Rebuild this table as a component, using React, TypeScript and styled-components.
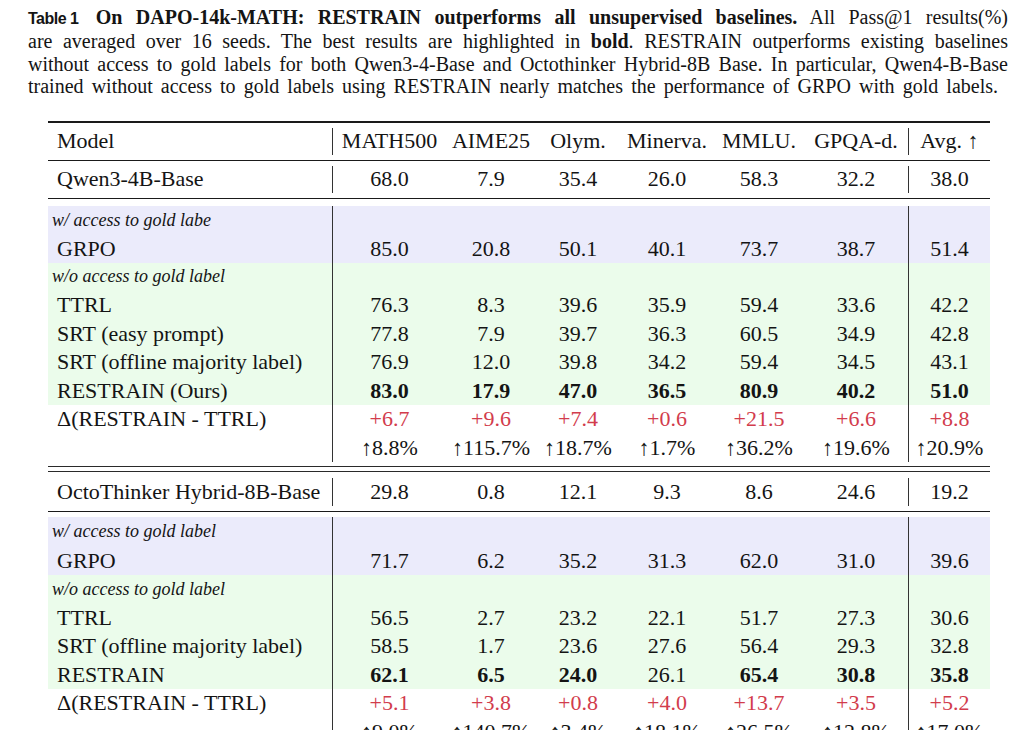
import React from "react";
import styled, { createGlobalStyle } from "styled-components";

const SERIF = `"Liberation Serif", "Times New Roman", serif`;

const GlobalStyle = createGlobalStyle`
  html, body {
    margin: 0;
    padding: 0;
    background: #ffffff;
    overflow: hidden;
  }
  body {
    font-family: ${SERIF};
    color: #141414;
  }
`;

// column widths of the tabular, left edge at x=48
const COLS = "284px 114px 90px 84px 94px 90px 104px 82px";

const GOLD_BG = "#ebebfb";
const NOGOLD_BG = "#ebfceb";

const Page = styled.main`
  padding: 6px 26px 0 28px;
`;

const Caption = styled.div`
  font-size: 20px;
  line-height: 22.4px;
`;

const CaptionLine = styled.div<{ $width?: number }>`
  width: ${(p) => (p.$width ? `${p.$width}px` : "100%")};
  text-align: justify;
  text-align-last: justify;
`;

// inline-block so the justified line doesn't stretch the space inside it
const TableTag = styled.span`
  display: inline-block;
  white-space: pre;
  font-family: "Liberation Sans", Arial, sans-serif;
  font-weight: 700;
  font-size: 16px;
  letter-spacing: -0.5px;
  margin-right: 4px;
`;

const Bold = styled.b`
  font-weight: 700;
`;

const Table = styled.section`
  width: 942px;
  margin: 23px 0 0 20px;
  font-size: 22px;
`;

const Rule = styled.div<{ $h: number }>`
  height: ${(p) => p.$h}px;
  background: #1a1a1a;
`;

const Gap = styled.div<{ $h: number }>`
  height: ${(p) => p.$h}px;
`;

const DoubleRule = styled.div`
  height: 1px;
  border-top: 1px solid #2a2a2a;
  border-bottom: 1px solid #2a2a2a;
  padding: 1.5px 0;
  background: #fff;
`;

const Section = styled.div<{ $bg?: string }>`
  background: ${(p) => p.$bg ?? "transparent"};
`;

const Row = styled.div<{ $h: number; $pad?: number }>`
  display: grid;
  grid-template-columns: ${COLS};
  height: ${(p) => p.$h}px;
  padding: ${(p) => p.$pad ?? 0}px 0;
`;

const Cell = styled.div<{ $sep?: boolean; $left?: boolean; $bold?: boolean; $red?: boolean }>`
  display: flex;
  align-items: center;
  justify-content: ${(p) => (p.$left ? "flex-start" : "center")};
  padding-left: ${(p) => (p.$left ? "9px" : "0")};
  border-left: ${(p) => (p.$sep ? "1px solid #333" : "none")};
  font-weight: ${(p) => (p.$bold ? 700 : 400)};
  color: ${(p) => (p.$red ? "#d23c4c" : "inherit")};
  white-space: nowrap;
`;

const GroupLabel = styled.div`
  display: flex;
  align-items: center;
  padding-left: 4px;
  font-style: italic;
  font-size: 18px;
  white-space: nowrap;
`;

const isSep = (i: number) => i === 1 || i === 7;

interface LineProps {
  name: string;
  values: string[];
  bold?: number[];
  red?: boolean;
  h: number;
  pad?: number;
}

const Line = ({ name, values, bold = [], red, h, pad }: LineProps) => (
  <Row $h={h} $pad={pad}>
    <Cell $left>{name}</Cell>
    {values.map((v, i) => (
      <Cell key={i} $sep={isSep(i + 1)} $bold={bold.includes(i)} $red={red}>
        {v}
      </Cell>
    ))}
  </Row>
);

const Label = ({ text, h }: { text: string; h: number }) => (
  <Row $h={h}>
    <GroupLabel>{text}</GroupLabel>
    {Array.from({ length: 7 }).map((_, i) => (
      <Cell key={i} $sep={isSep(i + 1)} />
    ))}
  </Row>
);

const ALL = [0, 1, 2, 3, 4, 5, 6];
const H = 28.5;

export default function App() {
  return (
    <>
      <GlobalStyle />
      <Page>
        <Caption>
          <CaptionLine>
            <TableTag>Table 1</TableTag>{" "}
            <Bold>On DAPO-14k-MATH: RESTRAIN outperforms all unsupervised baselines.</Bold> All Pass@1 results(%)
          </CaptionLine>
          <CaptionLine>
            are averaged over 16 seeds. The best results are highlighted in <Bold>bold</Bold>. RESTRAIN outperforms existing baselines
          </CaptionLine>
          <CaptionLine>
            without access to gold labels for both Qwen3-4-Base and Octothinker Hybrid-8B Base. In particular, Qwen4-B-Base
          </CaptionLine>
          <CaptionLine $width={970}>
            trained without access to gold labels using RESTRAIN nearly matches the performance of GRPO with gold labels.
          </CaptionLine>
        </Caption>

        <Table>
          <Rule $h={2} />
          <Line
            name="Model"
            values={["MATH500", "AIME25", "Olym.", "Minerva.", "MMLU.", "GPQA-d.", "Avg. ↑"]}
            h={27}
            pad={5}
          />
          <Rule $h={1} />
          <Line name="Qwen3-4B-Base" values={["68.0", "7.9", "35.4", "26.0", "58.3", "32.2", "38.0"]} h={27} pad={5} />
          <Rule $h={1} />
          <Gap $h={7} />
          <Section $bg={GOLD_BG}>
            <Label text="w/ access to gold labe" h={29} />
            <Line name="GRPO" values={["85.0", "20.8", "50.1", "40.1", "73.7", "38.7", "51.4"]} h={28} />
          </Section>
          <Section $bg={NOGOLD_BG}>
            <Label text="w/o access to gold label" h={H} />
            <Line name="TTRL" values={["76.3", "8.3", "39.6", "35.9", "59.4", "33.6", "42.2"]} h={H} />
            <Line name="SRT (easy prompt)" values={["77.8", "7.9", "39.7", "36.3", "60.5", "34.9", "42.8"]} h={H} />
            <Line
              name="SRT (offline majority label)"
              values={["76.9", "12.0", "39.8", "34.2", "59.4", "34.5", "43.1"]}
              h={H}
            />
            <Line
              name="RESTRAIN (Ours)"
              values={["83.0", "17.9", "47.0", "36.5", "80.9", "40.2", "51.0"]}
              bold={ALL}
              h={H}
            />
          </Section>
          <Section>
            <Line
              name="Δ(RESTRAIN - TTRL)"
              values={["+6.7", "+9.6", "+7.4", "+0.6", "+21.5", "+6.6", "+8.8"]}
              red
              h={H}
            />
            <Line
              name=""
              values={["↑8.8%", "↑115.7%", "↑18.7%", "↑1.7%", "↑36.2%", "↑19.6%", "↑20.9%"]}
              h={H}
            />
          </Section>
          <Gap $h={4} />
          <DoubleRule />
          <Line
            name="OctoThinker Hybrid-8B-Base"
            values={["29.8", "0.8", "12.1", "9.3", "8.6", "24.6", "19.2"]}
            h={28}
            pad={5.5}
          />
          <Rule $h={1} />
          <Gap $h={5} />
          <Section $bg={GOLD_BG}>
            <Label text="w/ access to gold label" h={29} />
            <Line name="GRPO" values={["71.7", "6.2", "35.2", "31.3", "62.0", "31.0", "39.6"]} h={29} />
          </Section>
          <Section $bg={NOGOLD_BG}>
            <Label text="w/o access to gold label" h={H} />
            <Line name="TTRL" values={["56.5", "2.7", "23.2", "22.1", "51.7", "27.3", "30.6"]} h={H} />
            <Line
              name="SRT (offline majority label)"
              values={["58.5", "1.7", "23.6", "27.6", "56.4", "29.3", "32.8"]}
              h={H}
            />
            <Line
              name="RESTRAIN"
              values={["62.1", "6.5", "24.0", "26.1", "65.4", "30.8", "35.8"]}
              bold={[0, 1, 2, 4, 5, 6]}
              h={H}
            />
          </Section>
          <Section>
            <Line
              name="Δ(RESTRAIN - TTRL)"
              values={["+5.1", "+3.8", "+0.8", "+4.0", "+13.7", "+3.5", "+5.2"]}
              red
              h={H}
            />
            <Line
              name=""
              values={["↑9.0%", "↑140.7%", "↑3.4%", "↑18.1%", "↑26.5%", "↑12.8%", "↑17.0%"]}
              h={H}
            />
          </Section>
        </Table>
      </Page>
    </>
  );
}
